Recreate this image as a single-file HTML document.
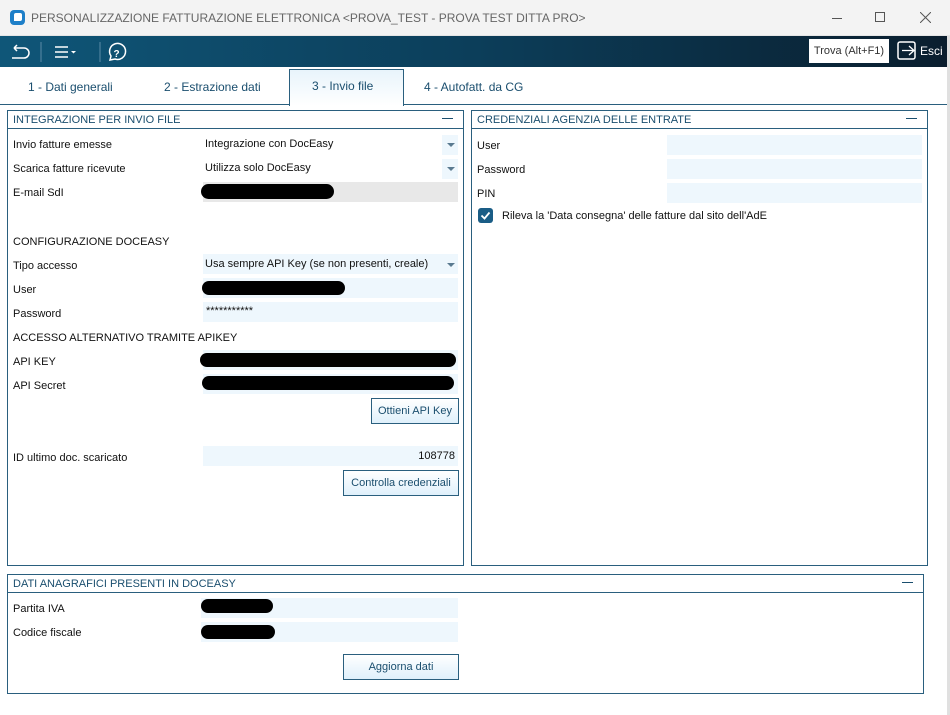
<!DOCTYPE html>
<html><head><meta charset="utf-8"><style>
*{box-sizing:border-box;margin:0;padding:0}
body{width:950px;height:715px;background:#fff;font-family:"Liberation Sans",sans-serif;font-size:11px;color:#111;position:relative;overflow:hidden}
.a{position:absolute}
.title{left:0;top:0;width:950px;height:36px;background:#f3f3f3;border-bottom:1px solid #e5e5e5}
.tb{left:0;top:36px;width:948px;height:31px;background:linear-gradient(90deg,#0f5678 0%,#0c3e5a 50%,#0a1e2e 100%)}
.panel{border:1px solid #2a5f7e;background:#fff}
.ph{left:0;top:0;right:0;height:18px;border-bottom:1px solid #2a5f7e;color:#1a4e6e;font-size:11px;padding:3px 0 0 5px}
.min{position:absolute;right:10px;top:7px;width:11px;height:1px;background:#1a4e6e}
.lbl{font-size:11px}
.f{background:#eef7fd}
.btn{border:1px solid #2a5f7e;background:linear-gradient(#fff,#dff0fb);color:#1a4e6e;text-align:center;font-size:11px}
.blob{background:#000;border-radius:10px}
.dd{width:0;height:0;border-left:4px solid transparent;border-right:4px solid transparent;border-top:4px solid #5a7a90}
.tab{top:80px;color:#1a4e6e;font-size:12px}
</style></head><body>
<div class="a title"></div>
<div class="a" style="left:10px;top:10px;width:15px;height:15px;background:#1e7fc8;border-radius:4px"><div style="position:absolute;left:4px;top:3px;width:8px;height:8px;background:#fff;border-radius:2px 2px 2px 0"></div></div>
<div class="a" style="left:31px;top:11px;font-size:12px;color:#666">PERSONALIZZAZIONE FATTURAZIONE ELETTRONICA &lt;PROVA_TEST - PROVA TEST DITTA PRO&gt;</div>
<div class="a" style="left:832px;top:18px;width:10px;height:1px;background:#555"></div>
<div class="a" style="left:875px;top:12px;width:10px;height:10px;border:1px solid #555"></div>
<svg class="a" style="left:920px;top:12px" width="11" height="11"><path d="M0 0L11 11M11 0L0 11" stroke="#555"/></svg>
<div class="a tb"></div>
<svg class="a" style="left:10px;top:40px" width="120" height="24" fill="none" stroke="#fff" stroke-width="1.5">
<path d="M4 8h10a5 5 0 0 1 0 10H2M4 8l3-3M4 8l3 3" />
<path d="M31 2v20M90 2v20" stroke="#5b8aa6" stroke-width="1"/>
<path d="M45 7h13M45 12h13M45 17h13"/>
<path d="M61 11h5l-2.5 2.5z" fill="#fff" stroke="none"/>
<path d="M100 20l1-4a8 8 0 1 1 4 3z"/>
<text x="103.5" y="17" font-size="10" fill="#fff" stroke="none" font-family="Liberation Sans" font-weight="bold">?</text>
</svg>
<div class="a" style="left:809px;top:39px;width:80px;height:24px;background:#fff;color:#333;font-size:11px;padding-top:6px;text-align:center">Trova (Alt+F1)</div>
<svg class="a" style="left:897px;top:41px" width="20" height="19" fill="none" stroke="#fff" stroke-width="1.5"><rect x="1" y="1" width="17" height="17" rx="2"/><path d="M5 9.5h12M12 5l5 4.5-5 4.5" stroke-width="1.3"/></svg>
<div class="a" style="left:920px;top:44px;color:#fff;font-size:12px">Esci</div>
<div class="a" style="left:947px;top:36px;width:3px;height:679px;background:#e0e0e0"></div>
<div class="a" style="left:0;top:67px;width:947px;height:37px;background:#fff"></div>
<div class="a" style="left:289px;top:69px;width:115px;height:37px;border:1px solid #2a5f7e;border-bottom:none;background:linear-gradient(#e8f4fb,#fff)"></div>
<div class="a tab" style="left:28px">1 - Dati generali</div>
<div class="a tab" style="left:164px">2 - Estrazione dati</div>
<div class="a tab" style="left:312px;top:79px">3 - Invio file</div>
<div class="a tab" style="left:424px">4 - Autofatt. da CG</div>
<div class="a" style="left:0;top:104px;width:289px;height:1px;background:#2a5f7e"></div>
<div class="a" style="left:403px;top:104px;width:544px;height:1px;background:#2a5f7e"></div>

<div class="a panel" style="left:7px;top:110px;width:457px;height:456px"><div class="a ph">INTEGRAZIONE PER INVIO FILE<div class="min"></div></div></div>
<div class="a panel" style="left:471px;top:110px;width:457px;height:456px"><div class="a ph">CREDENZIALI AGENZIA DELLE ENTRATE<div class="min"></div></div></div>
<div class="a panel" style="left:7px;top:574px;width:917px;height:120px"><div class="a ph">DATI ANAGRAFICI PRESENTI IN DOCEASY<div class="min"></div></div></div>

<!-- left panel -->
<div class="a lbl" style="left:13px;top:139px">Invio fatture emesse</div>
<div class="a" style="left:205px;top:138px">Integrazione con DocEasy</div>
<div class="a f" style="left:442px;top:135px;width:16px;height:20px"></div><div class="a dd" style="left:447px;top:143px"></div>
<div class="a lbl" style="left:13px;top:163px">Scarica fatture ricevute</div>
<div class="a" style="left:205px;top:162px">Utilizza solo DocEasy</div>
<div class="a f" style="left:442px;top:159px;width:16px;height:20px"></div><div class="a dd" style="left:447px;top:167px"></div>
<div class="a lbl" style="left:13px;top:187px">E-mail SdI</div>
<div class="a" style="left:203px;top:182px;width:255px;height:20px;background:#e8e8e8"></div>
<div class="a blob" style="left:201px;top:184px;width:133px;height:15px"></div>
<div class="a lbl" style="left:13px;top:236px">CONFIGURAZIONE DOCEASY</div>
<div class="a lbl" style="left:13px;top:260px">Tipo accesso</div>
<div class="a f" style="left:203px;top:254px;width:255px;height:20px"></div>
<div class="a" style="left:205px;top:258px">Usa sempre API Key (se non presenti, creale)</div>
<div class="a dd" style="left:447px;top:263px"></div>
<div class="a lbl" style="left:13px;top:284px">User</div>
<div class="a f" style="left:203px;top:278px;width:255px;height:20px"></div>
<div class="a blob" style="left:202px;top:281px;width:143px;height:14px"></div>
<div class="a lbl" style="left:13px;top:308px">Password</div>
<div class="a f" style="left:203px;top:302px;width:255px;height:20px"></div>
<div class="a" style="left:206px;top:305px">***********</div>
<div class="a lbl" style="left:13px;top:332px">ACCESSO ALTERNATIVO TRAMITE APIKEY</div>
<div class="a lbl" style="left:13px;top:356px">API KEY</div>
<div class="a f" style="left:203px;top:350px;width:255px;height:20px"></div>
<div class="a blob" style="left:200px;top:353px;width:256px;height:14px"></div>
<div class="a lbl" style="left:13px;top:380px">API Secret</div>
<div class="a f" style="left:203px;top:374px;width:255px;height:20px"></div>
<div class="a blob" style="left:202px;top:376px;width:252px;height:14px"></div>
<div class="a btn" style="left:371px;top:398px;width:88px;height:26px;padding-top:6px">Ottieni API Key</div>
<div class="a lbl" style="left:13px;top:452px">ID ultimo doc. scaricato</div>
<div class="a f" style="left:203px;top:446px;width:255px;height:20px"></div>
<div class="a" style="left:400px;top:450px;width:55px;text-align:right">108778</div>
<div class="a btn" style="left:343px;top:470px;width:116px;height:26px;padding-top:6px">Controlla credenziali</div>

<!-- right panel -->
<div class="a lbl" style="left:477px;top:140px">User</div>
<div class="a f" style="left:667px;top:135px;width:255px;height:20px"></div>
<div class="a lbl" style="left:477px;top:164px">Password</div>
<div class="a f" style="left:667px;top:159px;width:255px;height:20px"></div>
<div class="a lbl" style="left:477px;top:188px">PIN</div>
<div class="a f" style="left:667px;top:183px;width:255px;height:20px"></div>
<div class="a" style="left:478px;top:208px;width:15px;height:15px;background:#1a5d86;border-radius:3px"></div>
<svg class="a" style="left:478px;top:208px" width="15" height="15"><path d="M3.5 7.5l3 3 5-6" fill="none" stroke="#fff" stroke-width="1.8"/></svg>
<div class="a lbl" style="left:502px;top:210px">Rileva la 'Data consegna' delle fatture dal sito dell'AdE</div>

<!-- bottom panel -->
<div class="a lbl" style="left:13px;top:603px">Partita IVA</div>
<div class="a f" style="left:201px;top:598px;width:257px;height:20px"></div>
<div class="a blob" style="left:201px;top:599px;width:72px;height:14px"></div>
<div class="a lbl" style="left:13px;top:627px">Codice fiscale</div>
<div class="a f" style="left:201px;top:622px;width:257px;height:20px"></div>
<div class="a blob" style="left:201px;top:625px;width:74px;height:14px"></div>
<div class="a btn" style="left:343px;top:654px;width:116px;height:26px;padding-top:6px">Aggiorna dati</div>
</body></html>
